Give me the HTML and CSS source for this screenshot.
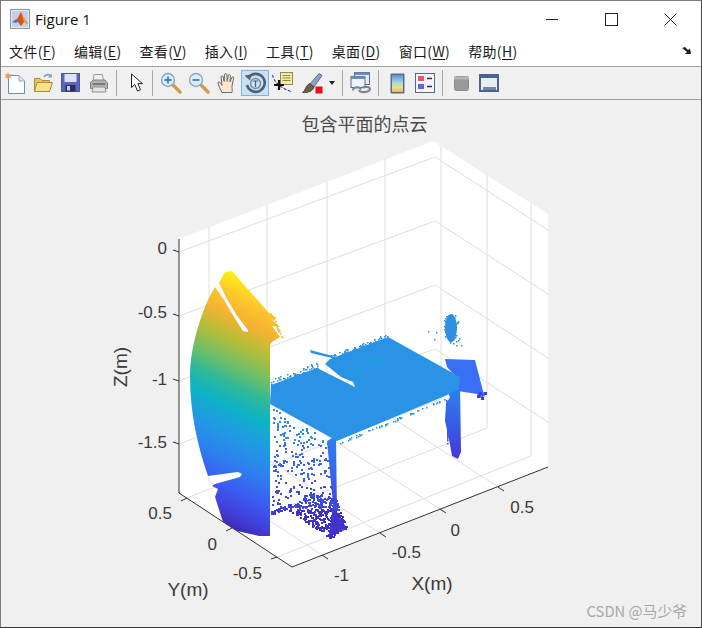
FILE: index.html
```html
<!DOCTYPE html>
<html lang="zh">
<head>
<meta charset="utf-8">
<title>Figure 1</title>
<link rel="stylesheet" href="styles.css">
</head>
<body>
<div class="window">
  <header class="titlebar">
    <svg class="app-icon" width="20" height="20" viewBox="0 0 20 20">
      <rect x="0.5" y="0.5" width="19" height="19" fill="#e4e8ee" stroke="#8d97a5"/>
      <rect x="2" y="2" width="16" height="16" fill="#c3d0e0"/>
      <path d="M2 13 L7 10 L11 3 L14 9 L18 15 L14 13 L11 17 L8 13 Z" fill="#d9521c"/>
      <path d="M2 13 L7 10 L9 12 L6 14 Z" fill="#4a7fb5"/>
      <path d="M11 3 L14 9 L18 15 L14 13 Z" fill="#f0a030"/>
    </svg>
    <span class="title-text">Figure 1</span>
    <div class="win-buttons">
      <svg width="14" height="14" viewBox="0 0 14 14"><path d="M0 6.500H12" stroke="#222" fill="none"/></svg>
      <svg width="14" height="14" viewBox="0 0 14 14"><rect x="0.500" y="0.500" width="12" height="12" stroke="#222" fill="none"/></svg>
      <svg width="14" height="14" viewBox="0 0 14 14"><path d="M0.500 0.500L12.500 12.500M12.500 0.500L0.500 12.500" stroke="#222" fill="none"/></svg>
    </div>
  </header>

  <nav class="menubar">
    <span class="menu-item">文件(<u>F</u>)</span>
    <span class="menu-item">编辑(<u>E</u>)</span>
    <span class="menu-item">查看(<u>V</u>)</span>
    <span class="menu-item">插入(<u>I</u>)</span>
    <span class="menu-item">工具(<u>T</u>)</span>
    <span class="menu-item">桌面(<u>D</u>)</span>
    <span class="menu-item">窗口(<u>W</u>)</span>
    <span class="menu-item">帮助(<u>H</u>)</span>
    <svg class="dock-arrow" width="10" height="8" viewBox="0 0 10 8"><path d="M0 1 L3 0 L6 3 L8 1.5 L9 7 L3 7 L5 5 Z" fill="#222"/></svg>
  </nav>

  <div class="toolbar">
    <span class="btn"><svg width="22" height="24" viewBox="0 0 22 24">
      <path d="M4.5 4.5H15L20.5 10V22.5H4.5Z" fill="#fdfeff" stroke="#6f8fac"/>
      <path d="M15 4.5V10H20.5" fill="#d8e6f2" stroke="#8fabc6"/>
      <path d="M4 1L5 3.5L8 3L6 5L8 7.5L5 6.5L4 9L3 6.5L0.5 7L2 5L0.5 3L3 3.5Z" fill="#ee9a5a"/>
    </svg></span>
    <span class="btn"><svg width="22" height="22" viewBox="0 0 22 22">
      <path d="M2.5 6.5V19.5H17.5V8.5H10L8 6.5Z" fill="#e8c25a" stroke="#b08c3a"/>
      <path d="M2.5 19.5L5 10.5H20.5L17.5 19.5Z" fill="#f8e290" stroke="#b08c3a"/>
      <path d="M12 5C14 2 17 2 19 4" fill="none" stroke="#7f9fc0" stroke-width="1.6"/>
      <path d="M19.8 1.5V5.5H15.8Z" fill="#7f9fc0"/>
    </svg></span>
    <span class="btn"><svg width="20" height="20" viewBox="0 0 20 20">
      <rect x="0.5" y="0.5" width="18" height="18" fill="#5a66bd" stroke="#4a569f"/>
      <rect x="3.5" y="1" width="12" height="8" fill="#dfe4f5"/>
      <rect x="4.5" y="12" width="10" height="6.5" fill="#2b2f58"/>
      <rect x="6" y="13" width="3" height="4.5" fill="#c8cfe6"/>
    </svg></span>
    <span class="btn"><svg width="20" height="20" viewBox="0 0 20 20">
      <path d="M5 1.5H13L15 8H4Z" fill="#f2f2f2" stroke="#9a9a9a"/>
      <path d="M1.5 9.5L4 7H16L18.5 10V15.5H1.5Z" fill="#b2b2b2" stroke="#808080"/>
      <path d="M4 14H16L17 19H3Z" fill="#e4e4e4" stroke="#909090"/>
      <rect x="3.5" y="10" width="13" height="2" fill="#7a7a7a"/>
    </svg></span>
    <i class="sep"></i>
    <span class="btn"><svg width="14" height="20" viewBox="0 0 14 20">
      <path d="M1.5 1V14.5L4.8 11.5L7.5 18L10.5 16.7L7.8 10.6H12.5Z" fill="#fff" stroke="#222"/>
    </svg></span>
    <i class="sep sep-tight"></i>
    <span class="btn"><svg width="22" height="22" viewBox="0 0 22 22">
      <path d="M13 13L20 20" stroke="#cf9a50" stroke-width="3.4" stroke-linecap="round"/>
      <circle cx="8" cy="8" r="6.5" fill="#dcebf8" stroke="#8aa8c6" stroke-width="1.4"/>
      <path d="M4.5 8H11.5M8 4.5V11.5" stroke="#4a7cbb" stroke-width="1.8"/>
    </svg></span>
    <span class="btn"><svg width="22" height="22" viewBox="0 0 22 22">
      <path d="M13 13L20 20" stroke="#cf9a50" stroke-width="3.4" stroke-linecap="round"/>
      <circle cx="8" cy="8" r="6.5" fill="#dcebf8" stroke="#8aa8c6" stroke-width="1.4"/>
      <path d="M4.5 8H11.5" stroke="#4a7cbb" stroke-width="1.8"/>
    </svg></span>
    <span class="btn"><svg width="21" height="22" viewBox="0 0 21 22">
      <path d="M5 20.5C3 17 1.5 13.5 1 11C1 9.5 2.8 9.5 3.5 11L5 13.5L4 5C4 3.5 6 3.5 6.3 5L7.2 9.5L7.5 2.8C7.7 1.2 9.8 1.2 10 2.8L10.2 9.5L11.2 3.5C11.5 2 13.4 2.2 13.4 3.8L13 10L14.8 5.5C15.3 4.2 17 4.8 16.6 6.2L15 14C15 16.5 15.5 18 15 20.5Z" fill="#fbe6d2" stroke="#6a6a6a"/>
    </svg></span>
    <span class="btn btn-active"><svg width="22" height="22" viewBox="0 0 22 22">
      <path d="M4.5 5.5A9 9 0 1 1 3 13" fill="none" stroke="#4d6178" stroke-width="2.6"/>
      <path d="M0.5 3.5L7.5 2.5L6 8.5Z" fill="#4d6178"/>
      <circle cx="11.5" cy="11.5" r="5" fill="none" stroke="#7a8a9c" stroke-width="1.4"/>
      <path d="M9 9H14M11.5 9V15" stroke="#4d6178" stroke-width="1.2"/>
    </svg></span>
    <span class="btn"><svg width="22" height="22" viewBox="0 0 22 22">
      <path d="M0.5 3C2 9 6 15 20 20" fill="none" stroke="#2a3bb0" stroke-dasharray="3 1.5" stroke-width="1.1"/>
      <rect x="8.5" y="0.5" width="12" height="12" fill="#f2eda0" stroke="#8d8a52"/>
      <path d="M10.5 3.5H18.5M10.5 6H18.5M10.5 8.5H18.5" stroke="#8d8a52"/>
      <path d="M7 8V18M2 13H12" stroke="#111" stroke-width="2.2"/>
    </svg></span>
    <span class="btn btn-brush"><svg width="24" height="22" viewBox="0 0 24 22">
      <path d="M9 12L18 1.5L21 3.5L13 15Z" fill="#8aa3c4" stroke="#5e7088"/>
      <path d="M8.5 11.5L13 15C12 19 7 21 1.5 20.5C4.5 19 4.5 13.5 8.5 11.5Z" fill="#6d5f4d" stroke="#4f4638"/>
      <rect x="14.5" y="14.5" width="7" height="7" fill="#e8101c"/>
    </svg></span>
    <span class="drop"></span>
    <i class="sep sep-link"></i>
    <span class="btn"><svg width="22" height="22" viewBox="0 0 22 22">
      <rect x="4.5" y="0.5" width="15" height="12" fill="#e6edf5" stroke="#4e6f96"/>
      <rect x="4.5" y="0.5" width="15" height="2.5" fill="#6d8db4"/>
      <rect x="1" y="4.5" width="14" height="11" fill="#eef3f8" stroke="#4e6f96"/>
      <rect x="1" y="4.5" width="14" height="2.5" fill="#6d8db4"/>
      <path d="M3 18.5C3 14.5 10 14.5 11 17.5M9 18C10 21 19 21 20 17C20 14.5 14 14.5 12.5 16" fill="none" stroke="#7b8793" stroke-width="2.2"/>
    </svg></span>
    <i class="sep sep-mid"></i>
    <span class="btn"><svg width="15" height="21" viewBox="0 0 15 21">
      <defs><linearGradient id="cb" x1="0" y1="0" x2="0" y2="1">
        <stop offset="0" stop-color="#5c8fd8"/><stop offset=".45" stop-color="#a8d8d8"/><stop offset=".75" stop-color="#eee08a"/><stop offset="1" stop-color="#f0b060"/>
      </linearGradient></defs>
      <rect x="0.5" y="0.5" width="14" height="20" rx="1" fill="#5d6d85"/>
      <rect x="2" y="2" width="11" height="17" fill="url(#cb)"/>
    </svg></span>
    <span class="btn"><svg width="20" height="20" viewBox="0 0 20 20">
      <rect x="0.5" y="0.5" width="19" height="19" fill="#f4f6fa" stroke="#566a86"/>
      <rect x="3" y="3" width="6" height="5" fill="#e8566a"/>
      <rect x="3" y="11" width="6" height="5" fill="#5c66dd"/>
      <path d="M12 5.5H17M12 13.5H17" stroke="#333" stroke-width="1.6"/>
    </svg></span>
    <i class="sep sep-mid"></i>
    <span class="btn"><svg width="15" height="15" viewBox="0 0 15 15">
      <rect x="0.5" y="0.5" width="14" height="14" rx="2" fill="#9a9a9a" stroke="#8c8c8c"/>
      <rect x="0" y="0.5" width="15" height="3" fill="#b5b5b5"/>
    </svg></span>
    <span class="btn"><svg width="20" height="18" viewBox="0 0 20 18">
      <rect x="1" y="1" width="18" height="16" fill="#e9eef5" stroke="#48648f" stroke-width="2"/>
      <rect x="1" y="1" width="18" height="3" fill="#48648f"/>
      <rect x="4" y="13" width="13" height="3" fill="#6d86aa"/>
    </svg></span>
  </div>

  <main class="plot">
    <svg class="axes" width="700" height="526" viewBox="1 101 700 526">
      <defs>
        <linearGradient id="parula" gradientUnits="userSpaceOnUse" x1="230" y1="272" x2="127" y2="478">
          <stop offset="0" stop-color="#fcf114"/>
          <stop offset=".08" stop-color="#fdc82c"/>
          <stop offset=".17" stop-color="#f5b233"/>
          <stop offset=".26" stop-color="#b6bd38"/>
          <stop offset=".36" stop-color="#6dbf68"/>
          <stop offset=".44" stop-color="#2fb89a"/>
          <stop offset=".52" stop-color="#0cb4c4"/>
          <stop offset=".62" stop-color="#1f9be2"/>
          <stop offset=".72" stop-color="#2b84ee"/>
          <stop offset=".84" stop-color="#3b5df2"/>
          <stop offset=".93" stop-color="#4040dc"/>
          <stop offset="1" stop-color="#3d2ab0"/>
        </linearGradient>
        <linearGradient id="leg-r" gradientUnits="userSpaceOnUse" x1="0" y1="392" x2="0" y2="460">
          <stop offset="0" stop-color="#2d7ff0"/><stop offset="1" stop-color="#4338d8"/>
        </linearGradient>
        <linearGradient id="leg-l" gradientUnits="userSpaceOnUse" x1="0" y1="440" x2="0" y2="535">
          <stop offset="0" stop-color="#2d80ee"/><stop offset=".5" stop-color="#3c5ae8"/><stop offset="1" stop-color="#4134cc"/>
        </linearGradient>
      </defs>

      <polygon class="pane" points="179,240 433,142 548,215 548,468 292,568 179,494"/>

      <g class="grid">
        <path d="M209,228V482M267,206V460M327,183V437M385,160V414M441,147V400M487,176V429M531,204V457"/>
        <path d="M179,253L435,158L548,231M179,317L435,222L548,295M179,382L435,286L548,359M179,445L435,350L548,423"/>
        <path d="M322,556L209,482M380,534L267,460M440,510L327,437M498,488L385,414"/>
        <path d="M187,499L441,400M232,529L487,429M277,558L531,457"/>
      </g>

      <g class="axis">
        <path d="M179,240V494L292,568L548,468"/>
        <path d="M179,253L173,251M179,317L173,315M179,382L173,380M179,445L173,443"/>
        <path d="M187,499L181,502M232,529L226,532M277,558L271,560"/>
        <path d="M322,556L328,560M380,534L386,538M440,510L446,514M498,488L504,492"/>
      </g>

      <path class="wall" d="M215,288L224,301L234,318L243,332L248,333L248,331L236.500,316L226.500,299L219,284L225,273L232,272L245,287L270,315L277,319L272,321L280,328L272,327L280,338L272,343L270,346V537H259L237,532L223,523L215,498L218,490L212,487L215,485L240,478L242,475L238,473L208,477C198,448 190,415 190,377C190,345 204,305 215,288Z"/>

      <path class="fill-leg-l" d="M327,442L336,437L337,513L347,530L329,537L333,505Z"/>
      <path class="fill-leg-r" d="M447,392L460,385L461,453L458,460L452,457L449,440L445,422L446,405L450,398Z"/>
      <path class="chair" d="M445,360L475,361L483,392L485,397L480,399L477,395L458,392L458,380L447,368Z"/>
      <path class="table" d="M388,338L460,378L459,390L445,397L337,442L328,437L270,405L271,386L317,369L355,388L353,383L341,378L325,365L330,360Z"/>
      <path class="table-thin" d="M310,351L333,357L332,359L311,354Z"/>
      <ellipse class="tint" cx="358" cy="372" rx="5" ry="6"/>
      <ellipse class="tint" cx="375" cy="362" rx="7" ry="4"/>
      <ellipse class="blob" cx="451" cy="329" rx="6" ry="14"/>
      <g id="scatter"></g>

      <text class="plot-title" x="364.500" y="132" text-anchor="middle">包含平面的点云</text>

      <g class="ticks">
        <text x="167" y="255" text-anchor="end">0</text>
        <text x="167" y="319" text-anchor="end">-0.5</text>
        <text x="167" y="386" text-anchor="end">-1</text>
        <text x="167" y="449" text-anchor="end">-1.5</text>
        <text x="172" y="520" text-anchor="end">0.5</text>
        <text x="217" y="551" text-anchor="end">0</text>
        <text x="262" y="580" text-anchor="end">-0.5</text>
        <text x="349" y="582" text-anchor="end">-1</text>
        <text x="421" y="559" text-anchor="end">-0.5</text>
        <text x="460" y="537" text-anchor="end">0</text>
        <text x="534" y="514" text-anchor="end">0.5</text>
      </g>
      <g class="labels">
        <text x="432" y="591" text-anchor="middle">X(m)</text>
        <text x="188" y="597" text-anchor="middle">Y(m)</text>
        <text transform="translate(127 368) rotate(-90)" text-anchor="middle">Z(m)</text>
      </g>
    </svg>
    <span class="watermark">CSDN @马少爷</span>
  </main>
</div>
<script src="plot.js"></script>
</body>
</html>
```

FILE: styles.css
```css
* { box-sizing: border-box; }
html, body { margin: 0; padding: 0; }
body {
  width: 702px;
  height: 628px;
  overflow: hidden;
  font-family: "Noto Sans CJK SC", "Liberation Sans", sans-serif;
  color: #1a1a1a;
}
.window {
  width: 702px;
  height: 628px;
  display: flex;
  flex-direction: column;
  border: 1px solid #7b7b7b;
  border-right-color: #4a4a4a;
  border-bottom-color: #333;
  background: #fff;
}
.titlebar {
  height: 36px;
  flex: none;
  display: flex;
  align-items: center;
  padding-left: 9px;
  background: #fff;
}
.title-text {
  margin-left: 5px;
  font: 15px/20px "Open Sans", "Liberation Sans", sans-serif;
  color: #111;
}
.win-buttons {
  margin-left: auto;
  margin-right: 23px;
  padding-top: 1px;
  display: flex;
  gap: 45px;
}
.menubar {
  height: 30px;
  flex: none;
  display: flex;
  align-items: center;
  gap: 18px;
  padding: 0 8px 2px;
  background: #fff;
  border-bottom: 1px solid #a0a0a0;
  font-size: 14px;
}
.menu-item { white-space: nowrap; line-height: 20px; letter-spacing: .35px; }
.menu-item u { text-underline-offset: 2px; }
.dock-arrow { margin-left: auto; margin-right: 1px; }
.toolbar {
  height: 33px;
  flex: none;
  display: flex;
  align-items: center;
  background: #f0f0f0;
  border-bottom: 1px solid #a0a0a0;
}
.btn {
  width: 28px;
  height: 26px;
  flex: none;
  display: flex;
  align-items: center;
  justify-content: center;
}
.btn-active {
  background: #c9e0f5;
  border: 1px solid #86b3d9;
}
.btn-brush { margin-left: 2px; }
.drop {
  width: 0;
  height: 0;
  margin: 0 4px 0 2px;
  border: 3px solid transparent;
  border-top: 4px solid #222;
  border-bottom: 0;
}
.sep {
  width: 1px;
  height: 26px;
  flex: none;
  background: #a8a8a8;
  margin: 0 6px 0 3px;
}
.sep-tight { margin: 0 4px 0 1px; }
.sep-link { margin: 0 4px 0 3px; }
.sep-mid { margin: 0 4px 0 3px; }
.plot {
  flex: 1;
  position: relative;
  background: #f0f0f0;
  overflow: hidden;
}
.axes { display: block; }
.pane { fill: #fff; }
.grid path { fill: none; stroke: #dedede; stroke-width: 1; }
.axis path { fill: none; stroke: #333; stroke-width: 1; }
.wall { fill: url(#parula); }
.table { fill: #2a93e6; }
.table-thin { fill: #2c90e4; }
.chair { fill: #3a6ef5; }
.blob { fill: #2d8fe0; }
.tint { fill: #1aa3d0; opacity: .45; }
.fill-leg-l { fill: url(#leg-l); }
.fill-leg-r { fill: url(#leg-r); }
.plot-title {
  font: 18px "Noto Sans CJK SC", sans-serif;
  fill: #4a4a4a;
}
.ticks text, .labels text {
  font-family: "Liberation Sans", sans-serif;
  fill: #3a3a3a;
}
.ticks text { font-size: 17px; }
.labels text { font-size: 19px; }
.watermark {
  position: absolute;
  right: 14px;
  bottom: 6px;
  font-size: 14.8px;
  line-height: 20px;
  color: #a8a8a8;
  white-space: nowrap;
}
```

FILE: plot.js
```js
// Scatter of stray points in the cloud, from a seeded generator so each render is the same.
(function () {
  var state = 20240611;
  function rnd() {
    state = (state + 0x6d2b79f5) | 0;
    var t = Math.imul(state ^ (state >>> 15), 1 | state);
    t = (t + Math.imul(t ^ (t >>> 7), 61 | t)) ^ t;
    return ((t ^ (t >>> 14)) >>> 0) / 4294967296;
  }
  var group = document.getElementById('scatter');
  var NS = 'http://www.w3.org/2000/svg';

  function dot(x, y, color, size) {
    var r = document.createElementNS(NS, 'rect');
    r.setAttribute('x', Math.round(x));
    r.setAttribute('y', Math.round(y));
    r.setAttribute('width', size || 2);
    r.setAttribute('height', size || 2);
    r.setAttribute('fill', color);
    group.appendChild(r);
  }
  function inside(poly, x, y) {
    var hit = false;
    for (var i = 0, j = poly.length - 1; i < poly.length; j = i++) {
      var a = poly[i], b = poly[j];
      if ((a[1] > y) !== (b[1] > y) && x < (b[0] - a[0]) * (y - a[1]) / (b[1] - a[1]) + a[0]) hit = !hit;
    }
    return hit;
  }
  function scatter(poly, count, color, size) {
    var xs = poly.map(function (p) { return p[0]; });
    var ys = poly.map(function (p) { return p[1]; });
    var x0 = Math.min.apply(null, xs), x1 = Math.max.apply(null, xs);
    var y0 = Math.min.apply(null, ys), y1 = Math.max.apply(null, ys);
    var n = 0, guard = 0;
    while (n < count && guard++ < count * 60) {
      var x = x0 + rnd() * (x1 - x0), y = y0 + rnd() * (y1 - y0);
      if (inside(poly, x, y)) {
        dot(x, y, typeof color === 'function' ? color(y) : color, size);
        n++;
      }
    }
  }
  function fringe(x0, y0, x1, y1, count, reach, color) {
    for (var i = 0; i < count; i++) {
      var t = rnd();
      dot(x0 + (x1 - x0) * t, y0 + (y1 - y0) * t - rnd() * reach, color, 1.5);
    }
  }
  function ramp(y) {
    if (y < 445) return '#2f86ea';
    if (y < 480) return '#3a64e6';
    if (y < 510) return '#3f48dc';
    return '#4030c8';
  }

  // sparse floor points under the table
  scatter([[272, 408], [328, 438], [333, 500], [300, 495], [272, 512]], 210, ramp, 2);
  // dense wedge at the foot of the near leg
  scatter([[287, 510], [310, 493], [335, 498], [347, 530], [330, 539]], 420, ramp, 2);
  scatter([[270, 512], [290, 503], [292, 507], [272, 516]], 30, '#4040d8', 2);
  // rough edges on the table top and the legs
  fringe(271, 386, 317, 369, 60, 6, '#2a93e6');
  fringe(330, 360, 388, 338, 60, 4, '#2a93e6');
  fringe(337, 444, 445, 399, 50, -2, '#2a93e6');
  fringe(446, 400, 447, 445, 30, 0, '#3c5ae8');
  fringe(270, 315, 282, 340, 25, 3, '#f7b62f');
  // ragged outline of the blob upper right
  scatter([[444, 315], [458, 315], [459, 345], [444, 345]], 40, '#2d8fe0', 1.5);
  [[428, 332], [434, 340], [436, 333], [456, 346], [461, 346]].forEach(function (p) {
    dot(p[0], p[1], '#2d8fe0', 1.5);
  });
  [[477, 396], [481, 398], [484, 393], [479, 393]].forEach(function (p) {
    dot(p[0], p[1], '#4338d8', 3);
  });
})();
```
